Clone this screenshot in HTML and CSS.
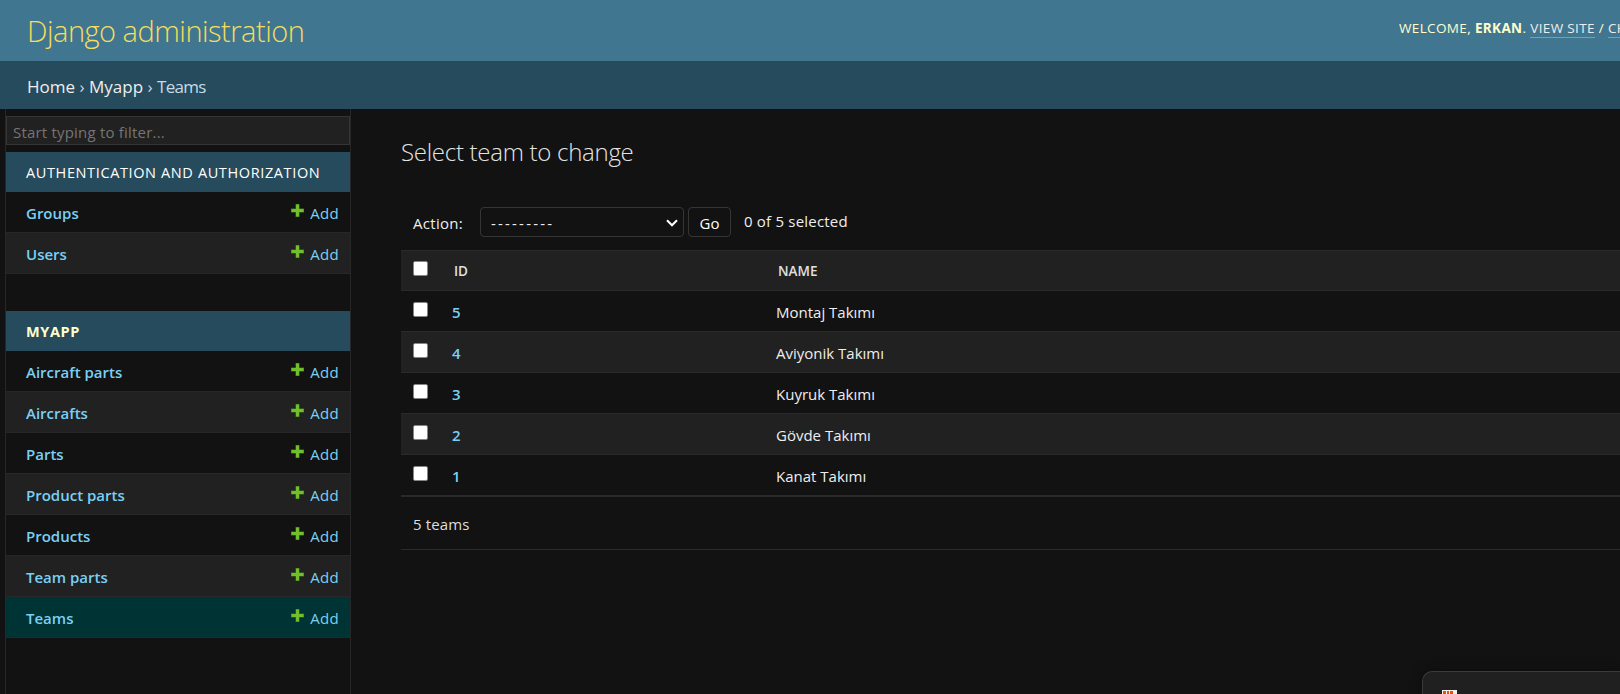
FILE: index.html
```html
<!DOCTYPE html>
<html lang="en">
<head>
<meta charset="utf-8">
<title>Select team to change | Django site admin</title>
<link rel="stylesheet" href="styles.css">
</head>
<body>
<svg class="defs" aria-hidden="true"><symbol id="plus" viewBox="0 0 13 13"><path d="M4.500 0h4v4.500H13v4H8.500V13h-4V8.500H0v-4h4.500z" fill="#3f741d"/><path d="M5 .5h3V5h4.500v3H8v4.500H5V8H.5V5H5z" fill="#70bf2b"/></symbol></svg>
<header class="header">
  <div class="site-name">Django administration</div>
  <div class="user-tools"><span class="welcome">WELCOME,</span> <strong>ERKAN</strong>. <a class="view">VIEW SITE</a> / <a>CH</a></div>
</header>
<nav class="breadcrumbs"><a>Home</a> › <a>Myapp</a> › <span class="here">Teams</span></nav>
<div class="main">
  <aside class="sidebar">
    <input class="filter" type="text" placeholder="Start typing to filter...">
    <section class="module">
      <h2 class="caption auth"><span>AUTHENTICATION AND AUTHORIZATION</span></h2>
      <div class="row"><a class="model">Groups</a><a class="add"><svg><use href="#plus"/></svg>Add</a></div>
      <div class="row"><a class="model">Users</a><a class="add"><svg><use href="#plus"/></svg>Add</a></div>
    </section>
    <section class="module">
      <h2 class="caption current-app"><span>MYAPP</span></h2>
      <div class="row"><a class="model">Aircraft parts</a><a class="add"><svg><use href="#plus"/></svg>Add</a></div>
      <div class="row"><a class="model">Aircrafts</a><a class="add"><svg><use href="#plus"/></svg>Add</a></div>
      <div class="row"><a class="model">Parts</a><a class="add"><svg><use href="#plus"/></svg>Add</a></div>
      <div class="row"><a class="model">Product parts</a><a class="add"><svg><use href="#plus"/></svg>Add</a></div>
      <div class="row"><a class="model">Products</a><a class="add"><svg><use href="#plus"/></svg>Add</a></div>
      <div class="row"><a class="model">Team parts</a><a class="add"><svg><use href="#plus"/></svg>Add</a></div>
      <div class="row current"><a class="model">Teams</a><a class="add"><svg><use href="#plus"/></svg>Add</a></div>
    </section>
  </aside>
  <main class="content">
    <h1 class="title">Select team to change</h1>
    <div class="actions">
      <label class="action-label">Action:</label>
      <div class="select"><span class="dashes">---------</span><svg class="chevron" viewBox="0 0 12 8"><path d="M1 1.300l5 5 5-5" fill="none" stroke="#fff" stroke-width="2"/></svg></div>
      <button class="go">Go</button>
      <span class="counter">0 of 5 selected</span>
    </div>
    <div class="results">
      <div class="line head"><i class="check"></i><span class="id">ID</span><span class="name">NAME</span></div>
      <div class="line"><i class="check"></i><a class="id">5</a><span class="name">Montaj Takımı</span></div>
      <div class="line"><i class="check"></i><a class="id">4</a><span class="name">Aviyonik Takımı</span></div>
      <div class="line"><i class="check"></i><a class="id">3</a><span class="name">Kuyruk Takımı</span></div>
      <div class="line"><i class="check"></i><a class="id">2</a><span class="name">Gövde Takımı</span></div>
      <div class="line"><i class="check"></i><a class="id">1</a><span class="name">Kanat Takımı</span></div>
    </div>
    <div class="paginator">5 teams</div>
  </main>
</div>
<div class="toast"><svg viewBox="0 0 15 4"><path d="M0 0h15v4H0z" fill="#f2f0ee"/><path d="M1 1h3v3H1zM5 1h2v3H5zM8 1h3v3H8z" fill="#e8510c"/></svg></div>
</body>
</html>
```
FILE: styles.css
```css
* { box-sizing: border-box; }
body {
  margin: 0;
  height: 694px;
  overflow: hidden;
  position: relative;
  display: flex;
  flex-direction: column;
  background: #121212;
  color: #eee;
  font: 15px/20px "Open Sans", "Noto Sans", sans-serif;
}
.defs { position: absolute; width: 0; height: 0; }
.header {
  flex: none;
  height: 61px;
  display: flex;
  justify-content: space-between;
  padding-left: 27px;
  background: #417690;
  color: #ffc;
  white-space: nowrap;
}
.site-name { font-size: 29px; line-height: 61px; font-weight: 300; color: #f5dd5d; letter-spacing: -0.5px; }
.user-tools { width: 221px; overflow: hidden; padding-top: 18px; font-size: 13.500px; letter-spacing: 0.360px; }
.user-tools a { display: inline-block; line-height: 18px; border-bottom: 1px solid #7a9fb1; color: #eee; }
.breadcrumbs {
  flex: none;
  height: 48px;
  padding: 0 27px;
  background: #264b5d;
  color: #c4dce8;
  font-size: 17px;
  line-height: 51px;
}
.breadcrumbs a { color: #eee; }
.here { letter-spacing: -0.700px; }
.main { flex: 1; min-height: 0; display: flex; }
.sidebar {
  flex: none;
  width: 346px;
  margin-left: 5px;
  padding-top: 7px;
  border: solid #272727;
  border-width: 0 1px;
}
.filter {
  display: block;
  width: 344px;
  height: 29px;
  margin-bottom: 7px;
  padding: 2px 6px 0;
  border: 1px solid #353535;
  background: #212121;
  color: #eee;
  font: 15px "Open Sans", sans-serif;
  letter-spacing: 0.200px;
}
.filter::placeholder { color: #757575; }
.module { margin-bottom: 37px; }
.caption {
  height: 40px;
  margin: 0;
  padding: 0 20px;
  background: #264b5d;
  font-size: 14.500px;
  line-height: 41px;
  font-weight: 400;
  letter-spacing: 0.620px;
  color: #fff;
  white-space: nowrap;
}
.current-app { font-weight: 700; color: #ffc; }
.row {
  height: 41px;
  display: flex;
  justify-content: space-between;
  padding: 0 11px 0 20px;
  border-bottom: 1px solid #272727;
  line-height: 43px;
  color: #79d0f5;
}
.row:nth-child(odd) { background: #212121; }
.row.current { background: #033; }
.model { font-weight: 600; }
.add { display: flex; letter-spacing: 0.300px; }
.add svg { width: 13px; height: 13px; margin: 12px 6px 0 0; }
.content { flex: 1; min-width: 0; padding-left: 50px; }
.title { margin: 27px 0 0; font-size: 24px; line-height: 32px; font-weight: 300; letter-spacing: -0.280px; color: #e4e4e4; }
.actions { display: flex; height: 30px; margin: 39px 0 13px; padding-left: 12px; white-space: nowrap; }
.action-label { width: 67px; padding-top: 6px; letter-spacing: 0.300px; }
.select {
  width: 204px;
  height: 30px;
  display: flex;
  justify-content: space-between;
  align-items: center;
  padding: 1px 5px 0 10px;
  border: 1px solid #353535;
  border-radius: 4px;
}
.dashes { letter-spacing: 2.200px; }
.chevron { width: 12px; height: 8px; }
.go {
  width: 43px;
  height: 30px;
  margin-left: 4px;
  padding: 1px 0 0;
  border: 1px solid #353535;
  border-radius: 4px;
  background: #121212;
  color: #fff;
  font: 15px "Open Sans", sans-serif;
}
.counter { padding: 4px 0 0 13px; letter-spacing: 0.200px; }
.results { border-top: 1px solid #2a2a2a; }
.line {
  height: 41px;
  display: flex;
  padding-left: 12px;
  border-bottom: 1px solid #2a2a2a;
  line-height: 43px;
}
.line:nth-child(odd) { background: #212121; }
.line.head { height: 40px; line-height: 41px; font-size: 13.500px; font-weight: 600; color: #e0e0e0; }
.check { width: 15px; height: 15px; margin: 11px 24px 0 0; border: 1px solid #858585; border-radius: 2px; background: #fff; }
.head .check { margin-top: 10px; }
.id { width: 324px; color: #79d0f5; font-weight: 600; }
.head .id, .head .name { position: relative; left: 2px; color: #e0e0e0; }
.paginator { height: 54px; padding-left: 12px; border: solid #2a2a2a; border-width: 1px 0; line-height: 55px; letter-spacing: 0.150px; color: #ddd; }
.toast {
  position: absolute;
  left: 1422px;
  top: 671px;
  width: 198px;
  height: 23px;
  padding: 18px 19px 0;
  border: solid #3b3b3b;
  border-width: 1px 0 0 1px;
  border-radius: 10px 0 0 0;
  background: #202020;
  box-shadow: 0 0 12px #0c0c0c;
}
.toast svg { display: block; width: 15px; height: 4px; }
```
